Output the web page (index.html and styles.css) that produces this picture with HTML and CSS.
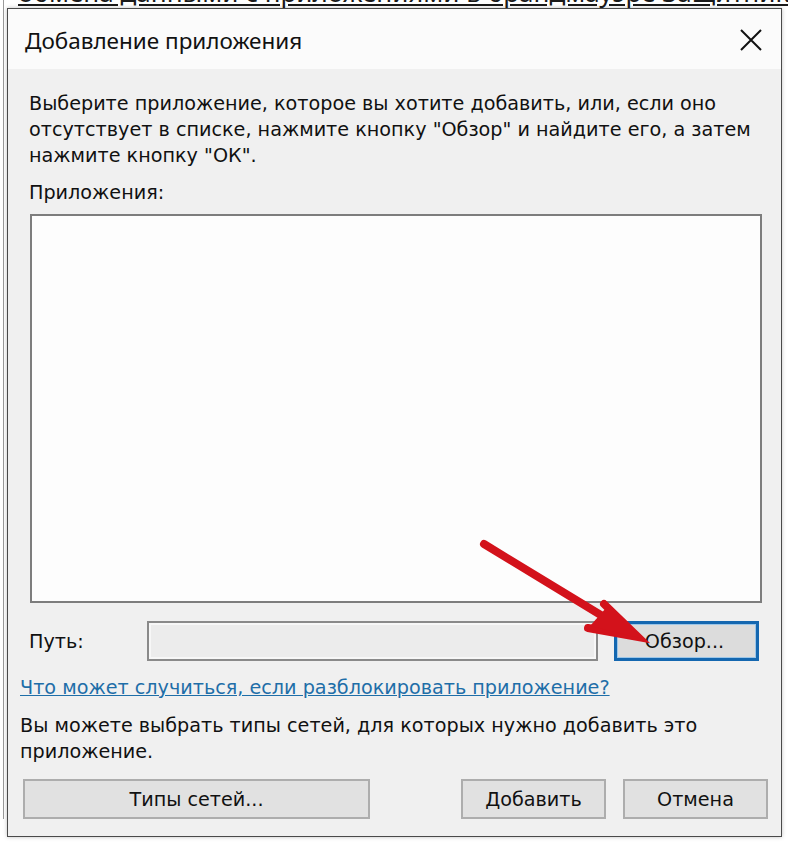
FILE: index.html
```html
<!DOCTYPE html>
<html lang="ru">
<head>
<meta charset="utf-8">
<link rel="stylesheet" href="styles.css">
</head>
<body>
<div class="desk">
  <div class="bgwin">
    <p class="bgtext">обмена данными с приложениями в брандмауэре Защитника</p>
  </div>
  <div class="dialog">
    <div class="titlebar">
      <span class="title">Добавление приложения</span>
      <svg class="close" width="24" height="24" viewBox="0 0 24 24"><path d="M2 2 L22 22 M22 2 L2 22" stroke="#111" stroke-width="2" fill="none"/></svg>
    </div>
    <div class="body">
      <div class="upper">
        <p class="intro">Выберите приложение, которое вы хотите добавить, или, если оно отсутствует в списке, нажмите кнопку "Обзор" и найдите его, а затем нажмите кнопку "ОК".</p>
        <p class="label">Приложения:</p>
        <div class="listbox"></div>
        <div class="pathrow">
          <span class="pathlabel">Путь:</span>
          <div class="pathinput"></div>
          <button class="btn btn-focus">Обзор...</button>
        </div>
      </div>
      <div class="lower">
        <a class="link" href="#">Что может случиться, если разблокировать приложение?</a>
        <p class="note">Вы можете выбрать типы сетей, для которых нужно добавить это приложение.</p>
        <div class="btnrow">
          <button class="btn btn-wide">Типы сетей...</button>
          <div class="spacer"></div>
          <button class="btn">Добавить</button>
          <button class="btn">Отмена</button>
        </div>
      </div>
    </div>
  </div>
  <svg class="arrow" width="788" height="842" viewBox="0 0 788 842">
    <g stroke="#d3121b" stroke-width="8" stroke-linecap="round" fill="none">
      <path d="M484 544 L632 634"/>
      <path d="M604 604 L638 637 L588 628"/>
    </g>
    <path d="M606 608 L640 638 L590 626 Z" fill="#d3121b"/>
  </svg>
</div>
</body>
</html>
```
FILE: styles.css
```css
* { box-sizing: border-box; }
html, body { margin: 0; padding: 0; }
body {
  width: 788px;
  height: 842px;
  overflow: hidden;
  background: #ffffff;
  font-family: "DejaVu Sans", "Noto Sans", sans-serif;
  color: #111;
}
.desk {
  position: relative;
  width: 788px;
  height: 842px;
  overflow: hidden;
}
.bgwin {
  height: 842px;
  border-left: 1px solid #9a9a9a;
  margin-left: 3px;
}
.bgtext {
  margin: -23px 0 0 14px;
  font-family: "Noto Sans", sans-serif;
  font-size: 26px;
  line-height: 30px;
  white-space: nowrap;
  color: #1a1a1a;
  text-decoration: underline;
}
.dialog {
  position: absolute;
  left: 7px;
  top: 8px;
  width: 775px;
  height: 829px;
  border: 1px solid #4a4a4a;
  background: #f0f0f0;
  display: flex;
  flex-direction: column;
  box-shadow: 0 0 4px rgba(0,0,0,0.25);
}
.titlebar {
  height: 60px;
  background: #fbfbfb;
  display: flex;
  align-items: center;
  justify-content: space-between;
  padding: 0 18px 0 17px;
  flex-shrink: 0;
}
.title {
  font-family: "Noto Sans", sans-serif;
  font-size: 22.5px;
  color: #111;
  padding-top: 2px;
}
.close { margin-top: 2px; }
.body {
  flex: 1;
  display: flex;
  flex-direction: column;
}
.upper {
  padding: 22px 19px 0 21px;
}
.intro {
  margin: 0;
  font-size: 19.2px;
  line-height: 26px;
  width: 735px;
}
.label {
  margin: 11px 0 0;
  font-size: 19.2px;
  line-height: 26px;
}
.listbox {
  margin-top: 8px;
  margin-left: 1px;
  height: 389px;
  background: #fdfdfd;
  border: 2px solid #7d7d7d;
}
.pathrow {
  margin-top: 18px;
  display: flex;
  align-items: center;
  height: 40px;
}
.pathlabel {
  font-size: 19.2px;
  width: 118px;
  flex-shrink: 0;
}
.pathinput {
  width: 451px;
  height: 40px;
  border: 2px solid #8a8a8a;
  background: #ececec;
  box-shadow: inset 0 0 0 2px #f7f7f7;
}
.btn {
  font-family: "DejaVu Sans", "Noto Sans", sans-serif;
  font-size: 19.2px;
  color: #111;
  background: #e1e1e1;
  border: 2px solid #adadad;
  height: 40px;
  width: 145px;
  padding: 0;
  margin: 0;
}
.btn-focus {
  margin-left: 16px;
  border: 3px solid #1467b0;
  background: #dcdcdc;
  box-shadow: inset 0 0 0 1px #9cc6e8;
  padding-right: 4px;
}
.lower {
  padding: 14px 0 0 12px;
}
.link {
  display: block;
  font-size: 19.2px;
  line-height: 26px;
  color: #1e6ea8;
  text-decoration: underline;
}
.note {
  margin: 12px 0 0;
  font-size: 19.2px;
  line-height: 26px;
  width: 720px;
}
.btnrow {
  margin-top: 14px;
  display: flex;
  align-items: center;
  padding-left: 3px;
}
.btn-wide { width: 347px; }
.spacer { width: 91px; }
.btnrow .btn + .btn { margin-left: 17px; }
.btnrow .spacer + .btn { margin-left: 0; }
.arrow {
  position: absolute;
  left: 0;
  top: 0;
  pointer-events: none;
}
```
